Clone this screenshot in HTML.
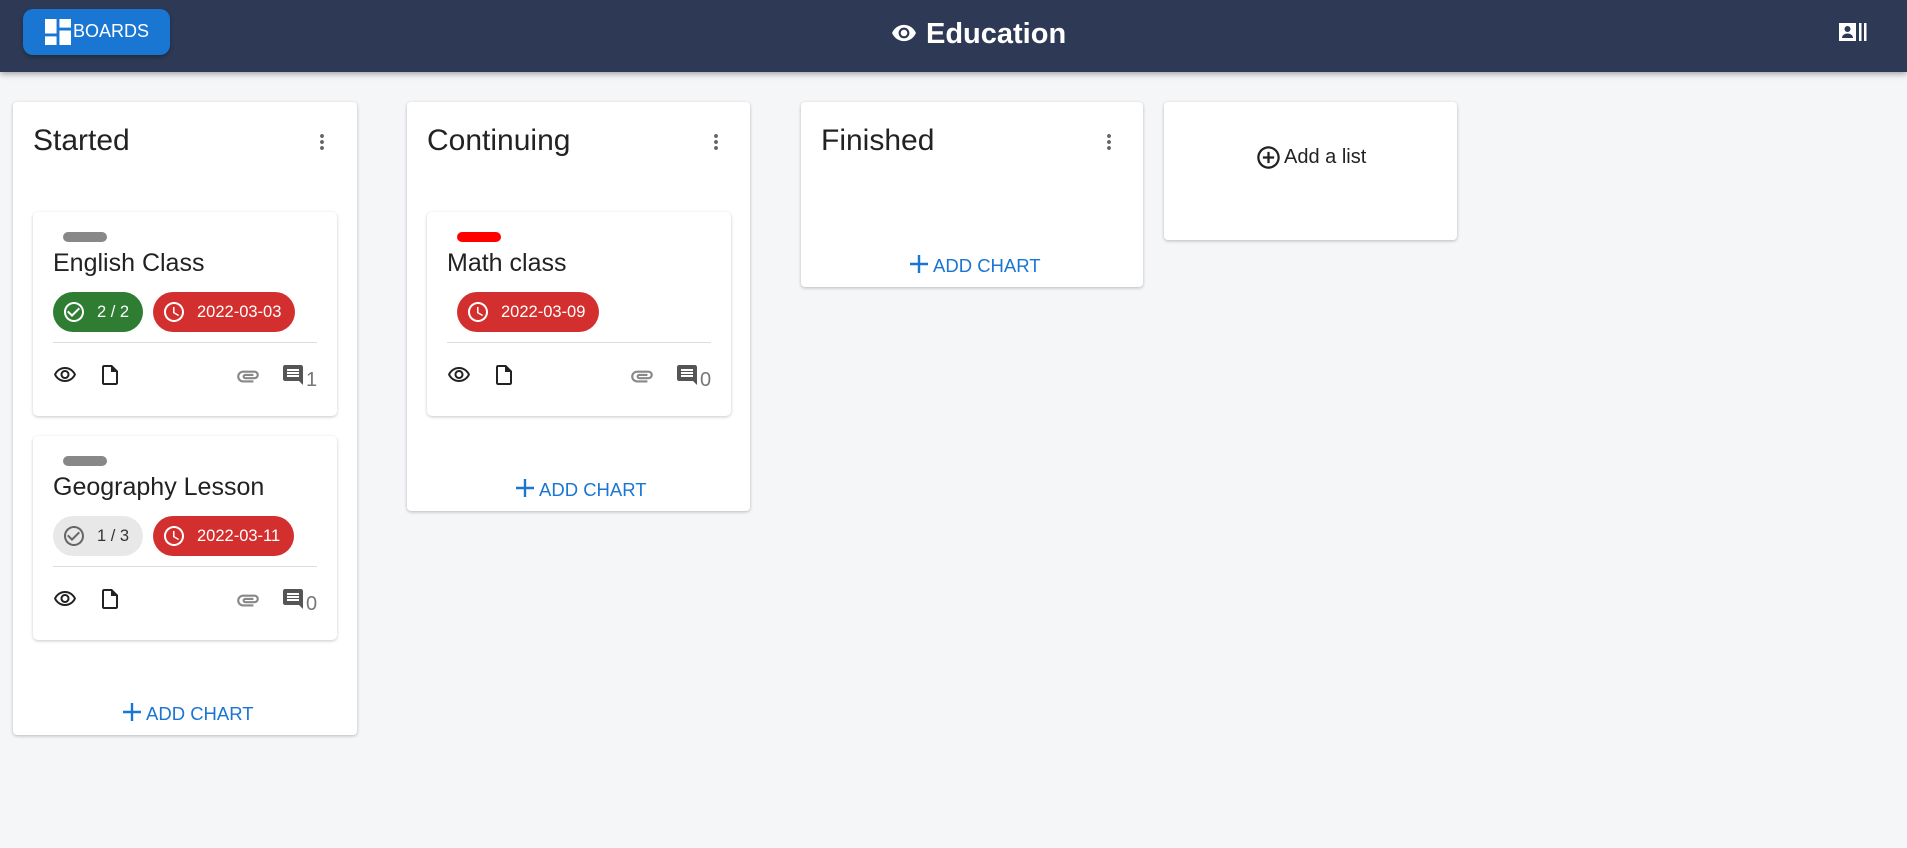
<!DOCTYPE html>
<html><head><meta charset="utf-8">
<style>
*{box-sizing:border-box;margin:0;padding:0}
body{width:1907px;height:848px;background:#f5f6f8;font-family:"Liberation Sans",Arial,sans-serif;position:relative;overflow:hidden;color:#1f1f1f}
.a{position:absolute}
.hdr{left:0;top:0;width:1907px;height:72px;background:#2e3a55;box-shadow:0 2px 6px rgba(0,0,0,.35)}
.btn{left:23px;top:9px;width:147px;height:46px;background:#1976d2;border-radius:10px;box-shadow:0 2px 4px rgba(0,0,0,.3);color:#fff;font-size:18px}
.col{background:#fff;border-radius:4px;box-shadow:0 1px 3px rgba(0,0,0,.25)}
.ct{font-size:30px;color:#222}
.card{background:#fff;border-radius:5px;box-shadow:0 1px 3px rgba(0,0,0,.22)}
.lbl{height:10px;width:44px;border-radius:5px}
.title{font-size:25px;color:#222}
.chip{height:40px;border-radius:20px;font-size:16.5px;color:#fff}
.chip svg{position:absolute;left:9px;top:8px}
.chip span{position:absolute;top:11px}
.div{height:1px;background:#ddd}
.add{color:#1976d2;font-size:18.5px}
.add svg{position:absolute;left:0;top:0}
.add span{position:absolute;left:25px;top:2px;white-space:nowrap}
.num{font-size:20px;color:#777}
</style></head><body>
<div class="a hdr"></div>
<div class="a btn">
<svg class="a" style="left:22px;top:10px" width="26" height="26" viewBox="3 3 18 18"><path fill="#fff" d="M3 13h8V3H3v10zm0 8h8v-6H3v6zm10 0h8V11h-8v10zm0-18v6h8V3h-8z"/></svg>
<span class="a" style="left:50px;top:12px">BOARDS</span></div>
<svg class="a" style="left:891px;top:20px" width="26" height="26" viewBox="0 0 24 24"><path fill="#fff" d="M12 4.5C7 4.5 2.73 7.61 1 12c1.73 4.39 6 7.5 11 7.5s9.27-3.11 11-7.5c-1.73-4.39-6-7.5-11-7.5zM12 17c-2.76 0-5-2.240-5-5s2.24-5 5-5 5 2.24 5 5-2.24 5-5 5zm0-8c-1.66 0-3 1.34-3 3s1.34 3 3 3 3-1.34 3-3-1.34-3-3-3z"/></svg>
<div class="a" style="left:926px;top:18px;color:#fff;font-size:29px;font-weight:bold">Education</div>
<svg class="a" style="left:1839px;top:23px" width="28" height="18" viewBox="0 0 28 18"><rect x="0" y="0" width="17" height="18" fill="#fff"/><circle cx="8.5" cy="6" r="3" fill="#2e3a55"/><path d="M3 15c0-3 3-4.5 5.5-4.5S14 12 14 15z" fill="#2e3a55"/><rect x="20" y="0" width="2.5" height="18" fill="#fff"/><rect x="25" y="0" width="2.5" height="18" fill="#fff"/></svg>

<div class="a col" style="left:13px;top:102px;width:344px;height:633px"></div>
<div class="a col" style="left:407px;top:102px;width:343px;height:409px"></div>
<div class="a col" style="left:801px;top:102px;width:342px;height:185px"></div>
<div class="a col" style="left:1164px;top:102px;width:293px;height:138px"></div>

<div class="a ct" style="left:33px;top:124px">Started</div>
<div class="a ct" style="left:427px;top:124px">Continuing</div>
<div class="a ct" style="left:821px;top:124px">Finished</div>
<svg class="a" style="left:310px;top:130px" width="24" height="24" viewBox="0 0 24 24"><path fill="#666" d="M12 8c1.1 0 2-.9 2-2s-.9-2-2-2-2 .9-2 2 .9 2 2 2zm0 2c-1.1 0-2 .9-2 2s.9 2 2 2 2-.9 2-2-.9-2-2-2zm0 6c-1.1 0-2 .9-2 2s.9 2 2 2 2-.9 2-2-.9-2-2-2z"/></svg>
<svg class="a" style="left:704px;top:130px" width="24" height="24" viewBox="0 0 24 24"><path fill="#666" d="M12 8c1.1 0 2-.9 2-2s-.9-2-2-2-2 .9-2 2 .9 2 2 2zm0 2c-1.1 0-2 .9-2 2s.9 2 2 2 2-.9 2-2-.9-2-2-2zm0 6c-1.1 0-2 .9-2 2s.9 2 2 2 2-.9 2-2-.9-2-2-2z"/></svg>
<svg class="a" style="left:1097px;top:130px" width="24" height="24" viewBox="0 0 24 24"><path fill="#666" d="M12 8c1.1 0 2-.9 2-2s-.9-2-2-2-2 .9-2 2 .9 2 2 2zm0 2c-1.1 0-2 .9-2 2s.9 2 2 2 2-.9 2-2-.9-2-2-2zm0 6c-1.1 0-2 .9-2 2s.9 2 2 2 2-.9 2-2-.9-2-2-2z"/></svg>

<svg class="a" style="left:1255px;top:144px" width="27" height="27" viewBox="0 0 24 24"><path fill="#222" d="M13 7h-2v4H7v2h4v4h2v-4h4v-2h-4V7zm-1-5C6.48 2 2 6.48 2 12s4.48 10 10 10 10-4.48 10-10S17.52 2 12 2zm0 18c-4.41 0-8-3.59-8-8s3.59-8 8-8 8 3.59 8 8-3.59 8-8 8z"/></svg>
<div class="a" style="left:1284px;top:146px;font-size:20px;color:#222">Add a list</div>

<div class="a add" style="left:121px;top:701px"><svg width="22" height="22" viewBox="0 0 22 22"><path d="M11 2v18M2 11h18" stroke="#1976d2" stroke-width="2.4"/></svg><span>ADD CHART</span></div>
<div class="a add" style="left:514px;top:477px"><svg width="22" height="22" viewBox="0 0 22 22"><path d="M11 2v18M2 11h18" stroke="#1976d2" stroke-width="2.4"/></svg><span>ADD CHART</span></div>
<div class="a add" style="left:908px;top:253px"><svg width="22" height="22" viewBox="0 0 22 22"><path d="M11 2v18M2 11h18" stroke="#1976d2" stroke-width="2.4"/></svg><span>ADD CHART</span></div>

<div class="a card" style="left:33px;top:212px;width:304px;height:204px">
 <div class="a lbl" style="left:30px;top:20px;background:#888"></div>
 <div class="a title" style="left:20px;top:37px">English Class</div>
 <div class="a chip" style="left:20px;top:80px;width:90px;background:#2e7d32">
  <svg width="24" height="24" viewBox="0 0 24 24"><path fill="#fff" d="M16.59 7.58L10 14.17l-3.59-3.58L5 12l5 5 8-8zM12 2C6.48 2 2 6.48 2 12s4.48 10 10 10 10-4.48 10-10S17.52 2 12 2zm0 18c-4.42 0-8-3.58-8-8s3.58-8 8-8 8 3.58 8 8-3.58 8-8 8z"/></svg><span style="left:44px">2 / 2</span></div>
 <div class="a chip" style="left:120px;top:80px;width:142px;background:#d32f2f">
  <svg width="24" height="24" viewBox="0 0 24 24"><path fill="#fff" d="M11.99 2C6.47 2 2 6.48 2 12s4.47 10 9.99 10C17.52 22 22 17.52 22 12S17.52 2 11.99 2zM12 20c-4.42 0-8-3.58-8-8s3.58-8 8-8 8 3.58 8 8-3.58 8-8 8zm.5-13H11v6l5.25 3.15.75-1.23-4.5-2.67z"/></svg><span style="left:44px">2022-03-03</span></div>
 <div class="a div" style="left:20px;top:130px;width:264px"></div>
 <svg class="a" style="left:20px;top:151px" width="24" height="24" viewBox="0 0 24 24"><path fill="#222" d="M12 6c3.79 0 7.17 2.13 8.82 5.5C19.17 14.87 15.79 17 12 17s-7.17-2.13-8.82-5.5C4.83 8.13 8.21 6 12 6m0-2C7 4 2.73 7.11 1 11.5 2.73 15.89 7 19 12 19s9.27-3.11 11-7.5C21.27 7.11 17 4 12 4zm0 5c1.38 0 2.5 1.12 2.5 2.5S13.38 14 12 14s-2.5-1.12-2.5-2.5S10.62 9 12 9m0-2c-2.48 0-4.5 2.02-4.5 4.5S9.52 16 12 16s4.5-2.02 4.5-4.5S14.48 7 12 7z"/></svg>
 <svg class="a" style="left:65px;top:151px" width="24" height="24" viewBox="0 0 24 24"><path fill="#222" d="M14 2H6c-1.1 0-1.99.9-1.99 2L4 20c0 1.1.89 2 1.99 2H18c1.1 0 2-.9 2-2V8l-6-6zM6 20V4h7v5h5v11H6z"/></svg>
 <svg class="a" style="left:202px;top:151px" width="26" height="26" viewBox="0 0 24 24"><path fill="#888" d="M2 12.5C2 9.46 4.46 7 7.5 7H18c2.21 0 4 1.79 4 4s-1.79 4-4 4H9.5C8.12 15 7 13.88 7 12.5S8.12 10 9.5 10H17v2H9.41c-.55 0-.55 1 0 1H18c1.1 0 2-.9 2-2s-.9-2-2-2H7.5C5.57 9 4 10.57 4 12.5S5.57 16 7.5 16H17v2H7.5C4.46 18 2 15.54 2 12.5z"/></svg>
 <svg class="a" style="left:248px;top:151px" width="24" height="24" viewBox="0 0 24 24"><path fill="#555" d="M21.99 4c0-1.1-.89-2-1.99-2H4c-1.1 0-2 .9-2 2v12c0 1.1.9 2 2 2h14l4 4-.01-18zM18 14H6v-2h12v2zm0-3H6V9h12v2zm0-3H6V6h12v2z"/></svg>
 <div class="a num" style="left:273px;top:157px">1</div>
</div>

<div class="a card" style="left:33px;top:436px;width:304px;height:204px">
 <div class="a lbl" style="left:30px;top:20px;background:#888"></div>
 <div class="a title" style="left:20px;top:37px">Geography Lesson</div>
 <div class="a chip" style="left:20px;top:80px;width:90px;background:#e8e8e8;color:#333">
  <svg width="24" height="24" viewBox="0 0 24 24"><path fill="#666" d="M16.59 7.58L10 14.17l-3.59-3.58L5 12l5 5 8-8zM12 2C6.48 2 2 6.48 2 12s4.48 10 10 10 10-4.48 10-10S17.52 2 12 2zm0 18c-4.42 0-8-3.58-8-8s3.58-8 8-8 8 3.58 8 8-3.58 8-8 8z"/></svg><span style="left:44px">1 / 3</span></div>
 <div class="a chip" style="left:120px;top:80px;width:141px;background:#d32f2f">
  <svg width="24" height="24" viewBox="0 0 24 24"><path fill="#fff" d="M11.99 2C6.47 2 2 6.48 2 12s4.47 10 9.99 10C17.52 22 22 17.52 22 12S17.52 2 11.99 2zM12 20c-4.42 0-8-3.58-8-8s3.58-8 8-8 8 3.58 8 8-3.58 8-8 8zm.5-13H11v6l5.25 3.15.75-1.23-4.5-2.67z"/></svg><span style="left:44px">2022-03-11</span></div>
 <div class="a div" style="left:20px;top:130px;width:264px"></div>
 <svg class="a" style="left:20px;top:151px" width="24" height="24" viewBox="0 0 24 24"><path fill="#222" d="M12 6c3.79 0 7.17 2.13 8.82 5.5C19.17 14.87 15.79 17 12 17s-7.17-2.13-8.82-5.5C4.83 8.13 8.21 6 12 6m0-2C7 4 2.73 7.11 1 11.5 2.73 15.89 7 19 12 19s9.27-3.11 11-7.5C21.27 7.11 17 4 12 4zm0 5c1.38 0 2.5 1.12 2.5 2.5S13.38 14 12 14s-2.5-1.12-2.5-2.5S10.62 9 12 9m0-2c-2.48 0-4.5 2.02-4.5 4.5S9.52 16 12 16s4.5-2.02 4.5-4.5S14.48 7 12 7z"/></svg>
 <svg class="a" style="left:65px;top:151px" width="24" height="24" viewBox="0 0 24 24"><path fill="#222" d="M14 2H6c-1.1 0-1.99.9-1.99 2L4 20c0 1.1.89 2 1.99 2H18c1.1 0 2-.9 2-2V8l-6-6zM6 20V4h7v5h5v11H6z"/></svg>
 <svg class="a" style="left:202px;top:151px" width="26" height="26" viewBox="0 0 24 24"><path fill="#888" d="M2 12.5C2 9.46 4.46 7 7.5 7H18c2.21 0 4 1.79 4 4s-1.79 4-4 4H9.5C8.12 15 7 13.88 7 12.5S8.12 10 9.5 10H17v2H9.41c-.55 0-.55 1 0 1H18c1.1 0 2-.9 2-2s-.9-2-2-2H7.5C5.57 9 4 10.57 4 12.5S5.57 16 7.5 16H17v2H7.5C4.46 18 2 15.54 2 12.5z"/></svg>
 <svg class="a" style="left:248px;top:151px" width="24" height="24" viewBox="0 0 24 24"><path fill="#555" d="M21.99 4c0-1.1-.89-2-1.99-2H4c-1.1 0-2 .9-2 2v12c0 1.1.9 2 2 2h14l4 4-.01-18zM18 14H6v-2h12v2zm0-3H6V9h12v2zm0-3H6V6h12v2z"/></svg>
 <div class="a num" style="left:273px;top:157px">0</div>
</div>

<div class="a card" style="left:427px;top:212px;width:304px;height:204px">
 <div class="a lbl" style="left:30px;top:20px;background:#f00"></div>
 <div class="a title" style="left:20px;top:37px">Math class</div>
 <div class="a chip" style="left:30px;top:80px;width:142px;background:#d32f2f">
  <svg width="24" height="24" viewBox="0 0 24 24"><path fill="#fff" d="M11.99 2C6.47 2 2 6.48 2 12s4.47 10 9.99 10C17.52 22 22 17.52 22 12S17.52 2 11.99 2zM12 20c-4.42 0-8-3.58-8-8s3.58-8 8-8 8 3.58 8 8-3.58 8-8 8zm.5-13H11v6l5.25 3.15.75-1.23-4.5-2.67z"/></svg><span style="left:44px">2022-03-09</span></div>
 <div class="a div" style="left:20px;top:130px;width:264px"></div>
 <svg class="a" style="left:20px;top:151px" width="24" height="24" viewBox="0 0 24 24"><path fill="#222" d="M12 6c3.79 0 7.17 2.13 8.82 5.5C19.17 14.87 15.79 17 12 17s-7.17-2.13-8.82-5.5C4.83 8.13 8.21 6 12 6m0-2C7 4 2.73 7.11 1 11.5 2.73 15.89 7 19 12 19s9.27-3.11 11-7.5C21.27 7.11 17 4 12 4zm0 5c1.38 0 2.5 1.12 2.5 2.5S13.38 14 12 14s-2.5-1.12-2.5-2.5S10.62 9 12 9m0-2c-2.48 0-4.5 2.02-4.5 4.5S9.52 16 12 16s4.5-2.02 4.5-4.5S14.48 7 12 7z"/></svg>
 <svg class="a" style="left:65px;top:151px" width="24" height="24" viewBox="0 0 24 24"><path fill="#222" d="M14 2H6c-1.1 0-1.99.9-1.99 2L4 20c0 1.1.89 2 1.99 2H18c1.1 0 2-.9 2-2V8l-6-6zM6 20V4h7v5h5v11H6z"/></svg>
 <svg class="a" style="left:202px;top:151px" width="26" height="26" viewBox="0 0 24 24"><path fill="#888" d="M2 12.5C2 9.46 4.46 7 7.5 7H18c2.21 0 4 1.79 4 4s-1.79 4-4 4H9.5C8.12 15 7 13.88 7 12.5S8.12 10 9.5 10H17v2H9.41c-.55 0-.55 1 0 1H18c1.1 0 2-.9 2-2s-.9-2-2-2H7.5C5.57 9 4 10.57 4 12.5S5.57 16 7.5 16H17v2H7.5C4.46 18 2 15.54 2 12.5z"/></svg>
 <svg class="a" style="left:248px;top:151px" width="24" height="24" viewBox="0 0 24 24"><path fill="#555" d="M21.99 4c0-1.1-.89-2-1.99-2H4c-1.1 0-2 .9-2 2v12c0 1.1.9 2 2 2h14l4 4-.01-18zM18 14H6v-2h12v2zm0-3H6V9h12v2zm0-3H6V6h12v2z"/></svg>
 <div class="a num" style="left:273px;top:157px">0</div>
</div>
</body></html>
